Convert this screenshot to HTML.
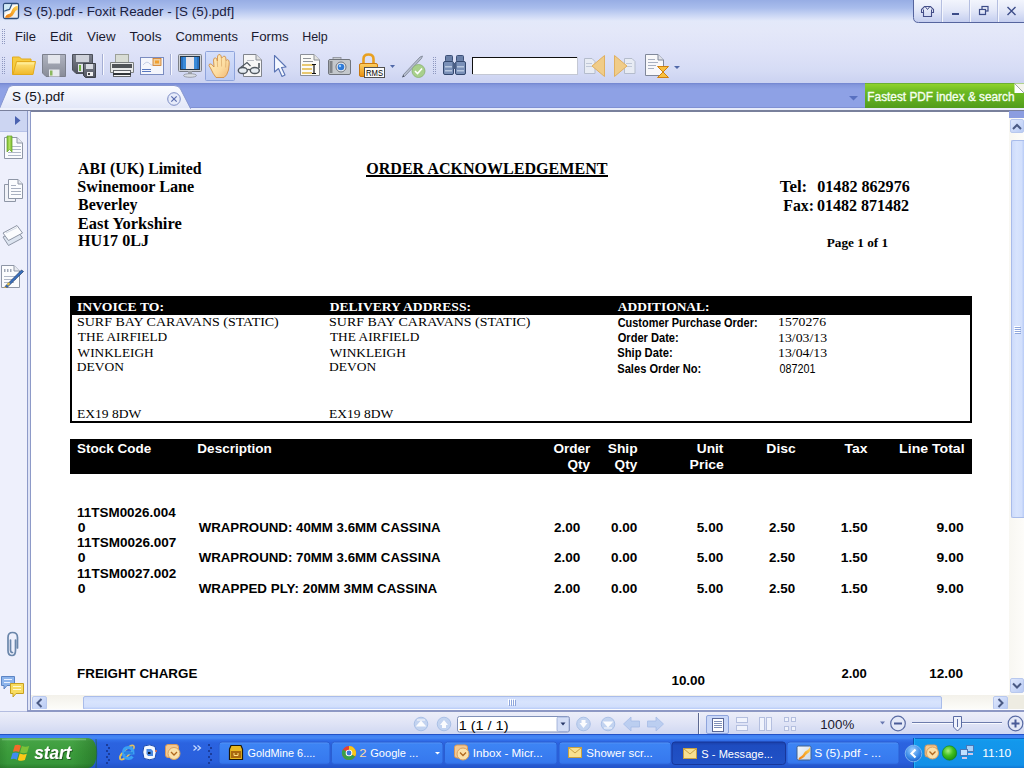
<!DOCTYPE html>
<html><head><meta charset="utf-8">
<style>
*{margin:0;padding:0;box-sizing:border-box}
html,body{width:1024px;height:768px;overflow:hidden;background:#fff;font-family:"Liberation Sans",sans-serif}
.a{position:absolute}
svg{position:absolute;left:0;top:0;overflow:visible}
</style></head><body>
<!-- chrome backgrounds -->
<div class="a" style="left:0;top:0;width:1024px;height:83px;background:linear-gradient(#97ade4 0px,#a9bdec 8px,#c9d5f4 15px,#e3e9fa 21px,#e4e8f9 30px,#dfe3f8 50px,#d6dcf5 70px,#cbd2f1 83px)"></div>
<!-- tab bar -->
<div class="a" style="left:0;top:83px;width:1024px;height:25px;background:linear-gradient(#7184d0 0px,#8497dc 2px,#8ea1e5 6px,#8ea1e5 25px)"></div>
<div class="a" style="left:0;top:107px;width:1024px;height:1px;background:#7f90d4"></div>
<div class="a" style="left:0;top:108px;width:1024px;height:2px;background:#e8ecfa"></div>
<div class="a" style="left:0;top:110px;width:1024px;height:2px;background:#79809c"></div>
<!-- main area -->
<div class="a" style="left:0;top:112px;width:27px;height:600px;background:#eef0fc"></div>
<div class="a" style="left:0;top:111px;width:27px;height:20px;background:#ccd5f2"></div>
<div class="a" style="left:0;top:131px;width:27px;height:1px;background:#b7c2e8"></div>
<div class="a" style="left:27px;top:111px;width:1px;height:601px;background:#8d9ac8"></div>
<div class="a" style="left:28px;top:111px;width:2px;height:601px;background:#dfe4f7"></div>
<div class="a" style="left:30px;top:111px;width:1px;height:601px;background:#8d9ac8"></div>
<div class="a" style="left:31px;top:112px;width:978px;height:583px;background:#fff"></div>
<!-- vertical scrollbar -->
<div class="a" style="left:1009px;top:111px;width:15px;height:584px;background:linear-gradient(90deg,#f8f7f2,#fdfcf9)"></div>
<div class="a" style="left:1009px;top:111px;width:15px;height:7px;background:#8b9de0"></div>
<div class="a" style="left:1010px;top:119px;width:14px;height:14px;border:1px solid #b8c8ee;border-radius:2px;background:linear-gradient(135deg,#dfe8fd,#b9cbf4)"></div>
<div class="a" style="left:1011px;top:140px;width:13px;height:378px;border:1px solid #a9bcea;border-right:0;border-radius:2px 0 0 2px;background:linear-gradient(90deg,#cddbfb,#d8e4fd 40%,#d2dffc 80%,#b8cbf6)"></div>
<div class="a" style="left:1010px;top:678px;width:14px;height:15px;border:1px solid #b8c8ee;border-radius:2px;background:linear-gradient(135deg,#dfe8fd,#b9cbf4)"></div>
<!-- horizontal scrollbar -->
<div class="a" style="left:31px;top:695px;width:993px;height:16px;background:linear-gradient(#f3f1ea,#fefefb)"></div>
<div class="a" style="left:32px;top:696px;width:15px;height:14px;border:1px solid #b8c8ee;border-radius:2px;background:linear-gradient(135deg,#dfe8fd,#b9cbf4)"></div>
<div class="a" style="left:83px;top:696px;width:859px;height:14px;border:1px solid #a9bcea;border-radius:2px;background:linear-gradient(#cddbfb,#d8e4fd 40%,#d2dffc 80%,#b8cbf6)"></div>
<div class="a" style="left:993px;top:696px;width:15px;height:14px;border:1px solid #b8c8ee;border-radius:2px;background:linear-gradient(135deg,#dfe8fd,#b9cbf4)"></div>
<div class="a" style="left:1008px;top:695px;width:16px;height:16px;background:#eeece2"></div>
<div class="a" style="left:0;top:711px;width:27px;height:1px;background:#b4bde0"></div><div class="a" style="left:31px;top:709px;width:993px;height:1px;background:#fbfcff"></div><div class="a" style="left:27px;top:710px;width:997px;height:2px;background:#8d98c4"></div>
<!-- status bar -->
<div class="a" style="left:0;top:712px;width:1024px;height:22px;background:linear-gradient(#eceef9,#e0e4f6 50%,#d0d8f2)"></div>
<!-- taskbar -->
<div class="a" style="left:0;top:734px;width:1024px;height:34px;background:linear-gradient(#2352c6 0px,#2352c6 1px,#3d7ef2 1px,#4688f4 4px,#3270ea 6px,#2b63e0 9px,#295fdc 28px,#2253c8 34px)"></div>
<!-- document boxes -->
<div class="a" style="left:70px;top:296px;width:902px;height:127px;border:2px solid #000;border-top:0"></div>
<div class="a" style="left:70px;top:296px;width:902px;height:19px;background:#000"></div>
<div class="a" style="left:70px;top:439px;width:902px;height:35px;background:#000"></div>
<div class="a" style="left:366px;top:175px;width:242px;height:2px;background:#000"></div>
<svg width="1024" height="768">
<text x="78.10" y="173.8" font-family="Liberation Serif" font-weight="700" font-size="15.7" fill="#000" textLength="123.54" lengthAdjust="spacingAndGlyphs">ABI (UK) Limited</text>
<text x="77.38" y="191.9" font-family="Liberation Serif" font-weight="700" font-size="15.7" fill="#000" textLength="116.83" lengthAdjust="spacingAndGlyphs">Swinemoor Lane</text>
<text x="78.00" y="210.4" font-family="Liberation Serif" font-weight="700" font-size="15.7" fill="#000" textLength="59.51" lengthAdjust="spacingAndGlyphs">Beverley</text>
<text x="77.85" y="228.8" font-family="Liberation Serif" font-weight="700" font-size="15.7" fill="#000" textLength="103.88" lengthAdjust="spacingAndGlyphs">East Yorkshire</text>
<text x="77.99" y="246.3" font-family="Liberation Serif" font-weight="700" font-size="15.7" fill="#000" textLength="70.93" lengthAdjust="spacingAndGlyphs">HU17 0LJ</text>
<text x="366.24" y="173.8" font-family="Liberation Serif" font-weight="700" font-size="15.7" fill="#000" textLength="241.20" lengthAdjust="spacingAndGlyphs">ORDER ACKNOWLEDGEMENT</text>
<text x="779.66" y="191.7" font-family="Liberation Serif" font-weight="700" font-size="15.7" fill="#000" textLength="27.62" lengthAdjust="spacingAndGlyphs">Tel:</text>
<text x="817.27" y="191.7" font-family="Liberation Serif" font-weight="700" font-size="15.7" fill="#000" textLength="92.48" lengthAdjust="spacingAndGlyphs">01482 862976</text>
<text x="783.27" y="210.6" font-family="Liberation Serif" font-weight="700" font-size="15.7" fill="#000" textLength="30.81" lengthAdjust="spacingAndGlyphs">Fax:</text>
<text x="816.97" y="210.6" font-family="Liberation Serif" font-weight="700" font-size="15.7" fill="#000" textLength="92.15" lengthAdjust="spacingAndGlyphs">01482 871482</text>
<text x="826.71" y="246.5" font-family="Liberation Serif" font-weight="700" font-size="12.8" fill="#000" textLength="61.44" lengthAdjust="spacingAndGlyphs">Page 1 of 1</text>
<text x="76.91" y="310.6" font-family="Liberation Serif" font-weight="700" font-size="13.5" fill="#fff" textLength="87.13" lengthAdjust="spacingAndGlyphs">INVOICE TO:</text>
<text x="329.70" y="310.6" font-family="Liberation Serif" font-weight="700" font-size="13.5" fill="#fff" textLength="141.31" lengthAdjust="spacingAndGlyphs">DELIVERY ADDRESS:</text>
<text x="617.77" y="310.5" font-family="Liberation Serif" font-weight="700" font-size="13.5" fill="#fff" textLength="91.65" lengthAdjust="spacingAndGlyphs">ADDITIONAL:</text>
<text x="76.99" y="325.6" font-family="Liberation Serif" font-weight="400" font-size="13.2" fill="#000" textLength="201.80" lengthAdjust="spacingAndGlyphs">SURF BAY CARAVANS (STATIC)</text>
<text x="77.84" y="341.3" font-family="Liberation Serif" font-weight="400" font-size="13.2" fill="#000" textLength="89.39" lengthAdjust="spacingAndGlyphs">THE AIRFIELD</text>
<text x="77.63" y="356.6" font-family="Liberation Serif" font-weight="400" font-size="13.2" fill="#000" textLength="76.03" lengthAdjust="spacingAndGlyphs">WINKLEIGH</text>
<text x="76.89" y="371.4" font-family="Liberation Serif" font-weight="400" font-size="13.2" fill="#000" textLength="47.17" lengthAdjust="spacingAndGlyphs">DEVON</text>
<text x="76.98" y="417.6" font-family="Liberation Serif" font-weight="400" font-size="13.2" fill="#000" textLength="64.28" lengthAdjust="spacingAndGlyphs">EX19 8DW</text>
<text x="329.09" y="325.6" font-family="Liberation Serif" font-weight="400" font-size="13.2" fill="#000" textLength="201.39" lengthAdjust="spacingAndGlyphs">SURF BAY CARAVANS (STATIC)</text>
<text x="329.94" y="341.3" font-family="Liberation Serif" font-weight="400" font-size="13.2" fill="#000" textLength="89.39" lengthAdjust="spacingAndGlyphs">THE AIRFIELD</text>
<text x="329.73" y="356.6" font-family="Liberation Serif" font-weight="400" font-size="13.2" fill="#000" textLength="76.03" lengthAdjust="spacingAndGlyphs">WINKLEIGH</text>
<text x="328.99" y="371.4" font-family="Liberation Serif" font-weight="400" font-size="13.2" fill="#000" textLength="47.17" lengthAdjust="spacingAndGlyphs">DEVON</text>
<text x="329.09" y="417.6" font-family="Liberation Serif" font-weight="400" font-size="13.2" fill="#000" textLength="64.08" lengthAdjust="spacingAndGlyphs">EX19 8DW</text>
<text x="617.70" y="326.9" font-family="Liberation Sans" font-weight="700" font-size="12.6" fill="#000" textLength="139.85" lengthAdjust="spacingAndGlyphs">Customer Purchase Order:</text>
<text x="617.69" y="341.9" font-family="Liberation Sans" font-weight="700" font-size="12.6" fill="#000" textLength="61.03" lengthAdjust="spacingAndGlyphs">Order Date:</text>
<text x="617.27" y="356.9" font-family="Liberation Sans" font-weight="700" font-size="12.6" fill="#000" textLength="55.35" lengthAdjust="spacingAndGlyphs">Ship Date:</text>
<text x="617.28" y="372.9" font-family="Liberation Sans" font-weight="700" font-size="12.6" fill="#000" textLength="84.05" lengthAdjust="spacingAndGlyphs">Sales Order No:</text>
<text x="778.04" y="326.2" font-family="Liberation Serif" font-weight="400" font-size="13.2" fill="#000" textLength="48.05" lengthAdjust="spacingAndGlyphs">1570276</text>
<text x="778.02" y="341.9" font-family="Liberation Serif" font-weight="400" font-size="13.2" fill="#000" textLength="49.12" lengthAdjust="spacingAndGlyphs">13/03/13</text>
<text x="778.02" y="356.9" font-family="Liberation Serif" font-weight="400" font-size="13.2" fill="#000" textLength="49.12" lengthAdjust="spacingAndGlyphs">13/04/13</text>
<text x="779.54" y="372.9" font-family="Liberation Sans" font-weight="400" font-size="12.6" fill="#000" textLength="35.93" lengthAdjust="spacingAndGlyphs">087201</text>
<text x="77.11" y="452.8" font-family="Liberation Sans" font-weight="700" font-size="13" fill="#fff" textLength="74.11" lengthAdjust="spacingAndGlyphs">Stock Code</text>
<text x="197.37" y="452.8" font-family="Liberation Sans" font-weight="700" font-size="13" fill="#fff" textLength="74.38" lengthAdjust="spacingAndGlyphs">Description</text>
<text x="553.40" y="452.8" font-family="Liberation Sans" font-weight="700" font-size="13" fill="#fff" textLength="36.98" lengthAdjust="spacingAndGlyphs">Order</text>
<text x="567.40" y="468.7" font-family="Liberation Sans" font-weight="700" font-size="13" fill="#fff" textLength="22.54" lengthAdjust="spacingAndGlyphs">Qty</text>
<text x="607.69" y="452.8" font-family="Liberation Sans" font-weight="700" font-size="13" fill="#fff" textLength="29.92" lengthAdjust="spacingAndGlyphs">Ship</text>
<text x="614.60" y="468.7" font-family="Liberation Sans" font-weight="700" font-size="13" fill="#fff" textLength="22.64" lengthAdjust="spacingAndGlyphs">Qty</text>
<text x="696.81" y="452.8" font-family="Liberation Sans" font-weight="700" font-size="13" fill="#fff" textLength="26.63" lengthAdjust="spacingAndGlyphs">Unit</text>
<text x="689.63" y="468.7" font-family="Liberation Sans" font-weight="700" font-size="13" fill="#fff" textLength="34.26" lengthAdjust="spacingAndGlyphs">Price</text>
<text x="766.34" y="452.8" font-family="Liberation Sans" font-weight="700" font-size="13" fill="#fff" textLength="29.42" lengthAdjust="spacingAndGlyphs">Disc</text>
<text x="844.56" y="452.8" font-family="Liberation Sans" font-weight="700" font-size="13" fill="#fff" textLength="22.98" lengthAdjust="spacingAndGlyphs">Tax</text>
<text x="899.13" y="452.8" font-family="Liberation Sans" font-weight="700" font-size="13" fill="#fff" textLength="65.47" lengthAdjust="spacingAndGlyphs">Line Total</text>
<text x="77.12" y="516.8" font-family="Liberation Sans" font-weight="700" font-size="13" fill="#000" textLength="98.50" lengthAdjust="spacingAndGlyphs">11TSM0026.004</text>
<text x="77.78" y="531.8" font-family="Liberation Sans" font-weight="700" font-size="13" fill="#000" textLength="7.76" lengthAdjust="spacingAndGlyphs">0</text>
<text x="198.68" y="531.8" font-family="Liberation Sans" font-weight="700" font-size="13" fill="#000" textLength="241.89" lengthAdjust="spacingAndGlyphs">WRAPROUND: 40MM 3.6MM CASSINA</text>
<text x="554.08" y="531.8" font-family="Liberation Sans" font-weight="700" font-size="13" fill="#000" textLength="26.32" lengthAdjust="spacingAndGlyphs">2.00</text>
<text x="611.00" y="531.8" font-family="Liberation Sans" font-weight="700" font-size="13" fill="#000" textLength="26.31" lengthAdjust="spacingAndGlyphs">0.00</text>
<text x="696.83" y="531.8" font-family="Liberation Sans" font-weight="700" font-size="13" fill="#000" textLength="26.38" lengthAdjust="spacingAndGlyphs">5.00</text>
<text x="769.09" y="531.8" font-family="Liberation Sans" font-weight="700" font-size="13" fill="#000" textLength="26.01" lengthAdjust="spacingAndGlyphs">2.50</text>
<text x="840.69" y="531.8" font-family="Liberation Sans" font-weight="700" font-size="13" fill="#000" textLength="26.93" lengthAdjust="spacingAndGlyphs">1.50</text>
<text x="936.64" y="531.8" font-family="Liberation Sans" font-weight="700" font-size="13" fill="#000" textLength="26.99" lengthAdjust="spacingAndGlyphs">9.00</text>
<text x="77.11" y="547.3" font-family="Liberation Sans" font-weight="700" font-size="13" fill="#000" textLength="99.13" lengthAdjust="spacingAndGlyphs">11TSM0026.007</text>
<text x="77.78" y="562.3" font-family="Liberation Sans" font-weight="700" font-size="13" fill="#000" textLength="7.76" lengthAdjust="spacingAndGlyphs">0</text>
<text x="198.68" y="562.3" font-family="Liberation Sans" font-weight="700" font-size="13" fill="#000" textLength="241.89" lengthAdjust="spacingAndGlyphs">WRAPROUND: 70MM 3.6MM CASSINA</text>
<text x="554.08" y="562.3" font-family="Liberation Sans" font-weight="700" font-size="13" fill="#000" textLength="26.32" lengthAdjust="spacingAndGlyphs">2.00</text>
<text x="611.00" y="562.3" font-family="Liberation Sans" font-weight="700" font-size="13" fill="#000" textLength="26.31" lengthAdjust="spacingAndGlyphs">0.00</text>
<text x="696.83" y="562.3" font-family="Liberation Sans" font-weight="700" font-size="13" fill="#000" textLength="26.38" lengthAdjust="spacingAndGlyphs">5.00</text>
<text x="769.09" y="562.3" font-family="Liberation Sans" font-weight="700" font-size="13" fill="#000" textLength="26.01" lengthAdjust="spacingAndGlyphs">2.50</text>
<text x="840.69" y="562.3" font-family="Liberation Sans" font-weight="700" font-size="13" fill="#000" textLength="26.93" lengthAdjust="spacingAndGlyphs">1.50</text>
<text x="936.64" y="562.3" font-family="Liberation Sans" font-weight="700" font-size="13" fill="#000" textLength="26.99" lengthAdjust="spacingAndGlyphs">9.00</text>
<text x="77.11" y="577.5" font-family="Liberation Sans" font-weight="700" font-size="13" fill="#000" textLength="99.10" lengthAdjust="spacingAndGlyphs">11TSM0027.002</text>
<text x="77.78" y="592.5" font-family="Liberation Sans" font-weight="700" font-size="13" fill="#000" textLength="7.76" lengthAdjust="spacingAndGlyphs">0</text>
<text x="198.67" y="592.5" font-family="Liberation Sans" font-weight="700" font-size="13" fill="#000" textLength="238.56" lengthAdjust="spacingAndGlyphs">WRAPPED PLY: 20MM 3MM CASSINA</text>
<text x="554.08" y="592.5" font-family="Liberation Sans" font-weight="700" font-size="13" fill="#000" textLength="26.32" lengthAdjust="spacingAndGlyphs">2.00</text>
<text x="611.00" y="592.5" font-family="Liberation Sans" font-weight="700" font-size="13" fill="#000" textLength="26.31" lengthAdjust="spacingAndGlyphs">0.00</text>
<text x="696.83" y="592.5" font-family="Liberation Sans" font-weight="700" font-size="13" fill="#000" textLength="26.38" lengthAdjust="spacingAndGlyphs">5.00</text>
<text x="769.09" y="592.5" font-family="Liberation Sans" font-weight="700" font-size="13" fill="#000" textLength="26.01" lengthAdjust="spacingAndGlyphs">2.50</text>
<text x="840.69" y="592.5" font-family="Liberation Sans" font-weight="700" font-size="13" fill="#000" textLength="26.93" lengthAdjust="spacingAndGlyphs">1.50</text>
<text x="936.64" y="592.5" font-family="Liberation Sans" font-weight="700" font-size="13" fill="#000" textLength="26.99" lengthAdjust="spacingAndGlyphs">9.00</text>
<text x="77.09" y="677.6" font-family="Liberation Sans" font-weight="700" font-size="13" fill="#000" textLength="120.24" lengthAdjust="spacingAndGlyphs">FREIGHT CHARGE</text>
<text x="671.42" y="684.7" font-family="Liberation Sans" font-weight="700" font-size="13" fill="#000" textLength="33.67" lengthAdjust="spacingAndGlyphs">10.00</text>
<text x="841.40" y="677.8" font-family="Liberation Sans" font-weight="700" font-size="13" fill="#000" textLength="25.49" lengthAdjust="spacingAndGlyphs">2.00</text>
<text x="929.21" y="677.8" font-family="Liberation Sans" font-weight="700" font-size="13" fill="#000" textLength="33.98" lengthAdjust="spacingAndGlyphs">12.00</text>
</svg>
<!-- ===== TITLE BAR ===== -->
<svg width="1024" height="768" style="pointer-events:none">
<defs>
<linearGradient id="fxbg" x1="0" y1="0" x2="1" y2="1"><stop offset="0" stop-color="#f4f8fc"/><stop offset="1" stop-color="#c9d6e6"/></linearGradient>
<linearGradient id="fxsw" x1="0" y1="1" x2="1" y2="0"><stop offset="0" stop-color="#f07a10"/><stop offset="0.6" stop-color="#f8b030"/><stop offset="1" stop-color="#ffd860"/></linearGradient>
<linearGradient id="wbtn" x1="0" y1="0" x2="0" y2="1"><stop offset="0" stop-color="#f4f6fd"/><stop offset="0.5" stop-color="#e2e7f8"/><stop offset="1" stop-color="#c3cdef"/></linearGradient>
<linearGradient id="fold" x1="0" y1="0" x2="0" y2="1"><stop offset="0" stop-color="#ffe680"/><stop offset="1" stop-color="#f0b828"/></linearGradient>
<linearGradient id="flop" x1="0" y1="0" x2="0" y2="1"><stop offset="0" stop-color="#b0b4c0"/><stop offset="1" stop-color="#888c98"/></linearGradient>
<linearGradient id="flop2" x1="0" y1="0" x2="0" y2="1"><stop offset="0" stop-color="#7c808c"/><stop offset="1" stop-color="#50545e"/></linearGradient>
<linearGradient id="green" x1="0" y1="0" x2="0" y2="1"><stop offset="0" stop-color="#93d52c"/><stop offset="0.35" stop-color="#6cba22"/><stop offset="1" stop-color="#519c1c"/></linearGradient>
<linearGradient id="tabg" x1="0" y1="0" x2="0" y2="1"><stop offset="0" stop-color="#fbfcff"/><stop offset="1" stop-color="#e2e7f8"/></linearGradient>
<linearGradient id="lockg" x1="0" y1="0" x2="0" y2="1"><stop offset="0" stop-color="#ffd060"/><stop offset="1" stop-color="#e89010"/></linearGradient>
<linearGradient id="startg" x1="0" y1="0" x2="0" y2="1"><stop offset="0" stop-color="#5aaf5a"/><stop offset="0.12" stop-color="#44a244"/><stop offset="0.5" stop-color="#3b9b3b"/><stop offset="0.85" stop-color="#37963a"/><stop offset="1" stop-color="#2d7f2f"/></linearGradient>
<linearGradient id="btng" x1="0" y1="0" x2="0" y2="1"><stop offset="0" stop-color="#5a98f8"/><stop offset="0.1" stop-color="#3d84f4"/><stop offset="0.9" stop-color="#3678ee"/><stop offset="1" stop-color="#2c66dc"/></linearGradient>
<linearGradient id="btnp" x1="0" y1="0" x2="0" y2="1"><stop offset="0" stop-color="#1a3fa8"/><stop offset="0.15" stop-color="#1e4cc0"/><stop offset="1" stop-color="#2152c6"/></linearGradient>
<linearGradient id="trayg" x1="0" y1="0" x2="0" y2="1"><stop offset="0" stop-color="#15a6f2"/><stop offset="0.1" stop-color="#1398ec"/><stop offset="0.9" stop-color="#1290e8"/><stop offset="1" stop-color="#1077d4"/></linearGradient>
<radialGradient id="ball" cx="0.4" cy="0.35" r="0.7"><stop offset="0" stop-color="#a8f080"/><stop offset="0.5" stop-color="#40c020"/><stop offset="1" stop-color="#189010"/></radialGradient>
<radialGradient id="bluec" cx="0.45" cy="0.3" r="0.75"><stop offset="0" stop-color="#a0d0ff"/><stop offset="0.6" stop-color="#3c8ce8"/><stop offset="1" stop-color="#1858c8"/></radialGradient>
<linearGradient id="hbox" x1="0" y1="0" x2="0" y2="1"><stop offset="0" stop-color="#d6e0fb"/><stop offset="1" stop-color="#bccbf4"/></linearGradient>
<linearGradient id="startsh" x1="0" y1="0" x2="1" y2="0"><stop offset="0" stop-color="#0a400a" stop-opacity="0.15"/><stop offset="0.08" stop-color="#0a400a" stop-opacity="0"/><stop offset="0.75" stop-color="#0a400a" stop-opacity="0"/><stop offset="1" stop-color="#0a400a" stop-opacity="0.3"/></linearGradient>
<linearGradient id="bmk" x1="0" y1="0" x2="1" y2="0"><stop offset="0" stop-color="#78b828"/><stop offset="0.5" stop-color="#b0e060"/><stop offset="1" stop-color="#78b828"/></linearGradient>
<linearGradient id="handg" x1="0" y1="0" x2="1" y2="1"><stop offset="0" stop-color="#fff0c0"/><stop offset="0.6" stop-color="#fcdca0"/><stop offset="1" stop-color="#f0b878"/></linearGradient>
<filter id="tsh" x="-10%" y="-10%" width="130%" height="140%"><feDropShadow dx="1" dy="1" stdDeviation="0.6" flood-color="#1a4a1a" flood-opacity="0.8"/></filter>
</defs>

<!-- app icon -->
<rect x="3.5" y="3.5" width="15" height="15" rx="1.5" fill="#eceef2" stroke="#2e4c78" stroke-width="1.3"/>
<path d="M4.2 4.2 L11.8 4.2 L9.6 9.3 L4.2 11.2 Z" fill="#cfe9f6"/>
<path d="M4.2 11.2 Q7 9.8 9.6 9.3 L11.8 4.2" fill="none" stroke="#2e5480" stroke-width="1.2"/>
<path d="M4.5 14.5 Q7 11.5 10.2 11 L12.5 5.5 L17.8 4.4 L17.8 6 Q14 7 12.5 10.5 Q10.5 13.5 6 17.5 L4.5 17.5 Z" fill="#fffef4"/>
<path d="M5 17.8 Q6 14.5 9.5 13.8 Q11 13.2 12 10 Q13.5 6.5 17.8 5.8 L17.8 9.5 Q15 10.5 14 13.5 Q12.5 17 9 17.8 Z" fill="url(#fxsw)"/>
<!-- window buttons -->
<path d="M913.5 -1 L913.5 17.5 Q913.5 22.5 918.5 22.5 L1025 22.5 L1025 -1 Z" fill="url(#wbtn)" stroke="#55649e" stroke-width="1"/>
<rect x="941" y="0" width="1" height="22" fill="#b4bee0"/><rect x="942" y="0" width="1" height="22" fill="#f4f6fd"/>
<rect x="969" y="0" width="1" height="22" fill="#b4bee0"/><rect x="970" y="0" width="1" height="22" fill="#f4f6fd"/>
<rect x="997" y="0" width="1" height="22" fill="#b4bee0"/><rect x="998" y="0" width="1" height="22" fill="#f4f6fd"/>
<path d="M924.5 6.5 L930.5 6.5 L933.5 9.5 L933.5 12.5 L931.5 12.5 L931.5 16.5 L923.5 16.5 L923.5 12.5 L921.5 12.5 L921.5 9.5 Z" fill="none" stroke="#444e88" stroke-width="1.1" stroke-linejoin="miter"/>
<path d="M923.5 9.5 L923.5 12.5 M931.5 9.5 L931.5 12.5" stroke="#444e88" stroke-width="1"/>
<path d="M925.5 7 L927.5 9.5 L929.5 7" fill="none" stroke="#444e88" stroke-width="1"/>
<rect x="952" y="13" width="7" height="2" fill="#3c4c88"/>
<rect x="982" y="6.5" width="6" height="4.5" fill="none" stroke="#3c4c88" stroke-width="1.2"/>
<rect x="979.5" y="9.5" width="6" height="5" fill="url(#wbtn)" stroke="#3c4c88" stroke-width="1.2"/>
<path d="M1007.5 7 L1015.5 15 M1015.5 7 L1007.5 15" stroke="#3c4c88" stroke-width="1.4"/>

<!-- menu grip -->
<g fill="#8e98c0">
<rect x="2" y="29" width="1" height="1"/><rect x="4" y="29" width="1" height="1"/>
<rect x="2" y="31" width="1" height="1"/><rect x="4" y="31" width="1" height="1"/>
<rect x="2" y="33" width="1" height="1"/><rect x="4" y="33" width="1" height="1"/>
<rect x="2" y="35" width="1" height="1"/><rect x="4" y="35" width="1" height="1"/>
<rect x="2" y="37" width="1" height="1"/><rect x="4" y="37" width="1" height="1"/>
<rect x="2" y="39" width="1" height="1"/><rect x="4" y="39" width="1" height="1"/>
<rect x="2" y="41" width="1" height="1"/><rect x="4" y="41" width="1" height="1"/>
<rect x="2" y="43" width="1" height="1"/><rect x="4" y="43" width="1" height="1"/>
</g>
<!-- toolbar grips -->
<g fill="#8e98c0">
<rect x="2" y="57" width="1" height="1"/><rect x="4" y="57" width="1" height="1"/>
<rect x="2" y="59" width="1" height="1"/><rect x="4" y="59" width="1" height="1"/>
<rect x="2" y="61" width="1" height="1"/><rect x="4" y="61" width="1" height="1"/>
<rect x="2" y="63" width="1" height="1"/><rect x="4" y="63" width="1" height="1"/>
<rect x="2" y="65" width="1" height="1"/><rect x="4" y="65" width="1" height="1"/>
<rect x="2" y="67" width="1" height="1"/><rect x="4" y="67" width="1" height="1"/>
<rect x="2" y="69" width="1" height="1"/><rect x="4" y="69" width="1" height="1"/>
<rect x="2" y="71" width="1" height="1"/><rect x="4" y="71" width="1" height="1"/>
<rect x="2" y="73" width="1" height="1"/><rect x="4" y="73" width="1" height="1"/>
<rect x="433" y="57" width="1" height="1"/><rect x="435" y="57" width="1" height="1"/>
<rect x="433" y="59" width="1" height="1"/><rect x="435" y="59" width="1" height="1"/>
<rect x="433" y="61" width="1" height="1"/><rect x="435" y="61" width="1" height="1"/>
<rect x="433" y="63" width="1" height="1"/><rect x="435" y="63" width="1" height="1"/>
<rect x="433" y="65" width="1" height="1"/><rect x="435" y="65" width="1" height="1"/>
<rect x="433" y="67" width="1" height="1"/><rect x="435" y="67" width="1" height="1"/>
<rect x="433" y="69" width="1" height="1"/><rect x="435" y="69" width="1" height="1"/>
<rect x="433" y="71" width="1" height="1"/><rect x="435" y="71" width="1" height="1"/>
<rect x="433" y="73" width="1" height="1"/><rect x="435" y="73" width="1" height="1"/>
</g>
<!-- ===== TOOLBAR ICONS ===== -->
<!-- folder 12-36 x 56-75 -->
<path d="M12.5 57 L19.5 57 L21.5 59 L31 59 L31 74.5 L12.5 74.5 Z" fill="#f6cc40" stroke="#e2aa1c" stroke-width="1" stroke-linejoin="round"/>
<path d="M16.5 61.5 L35.5 61.5 L33 74.5 L13 74.5 Z" fill="url(#fold)" stroke="#e2aa1c" stroke-width="1" stroke-linejoin="round"/>
<rect x="17" y="62.5" width="17" height="2" fill="#fff0a0" opacity="0.7"/>
<!-- save 42-66 x 54-77 -->
<path d="M42.5 54.5 L65.5 54.5 L65.5 76.5 L46 76.5 L42.5 73 Z" fill="url(#flop)" stroke="#7c808c" stroke-width="1"/>
<rect x="48" y="55" width="12" height="8.5" fill="#e4e6ec"/>
<rect x="49" y="69.5" width="10.5" height="7" fill="#e8eaee"/>
<rect x="50" y="70.5" width="2.5" height="5" fill="#8cb860"/>
<!-- save as 72-96 x 54-77 -->
<path d="M72.5 54.5 L92.5 54.5 L92.5 73.5 L76 73.5 L72.5 70 Z" fill="url(#flop2)" stroke="#4c505a" stroke-width="1"/>
<rect x="76" y="55" width="13" height="7" fill="#cfd2da"/>
<rect x="78" y="64" width="5" height="8" fill="#e0e2e8"/><rect x="79" y="65" width="2" height="6" fill="#70b040"/>
<path d="M83.5 63.5 L95.5 63.5 L95.5 77.5 L85.5 77.5 L83.5 75.5 Z" fill="url(#flop2)" stroke="#3c4048" stroke-width="1"/>
<rect x="86" y="64" width="7" height="5" fill="#d8dbe2"/>
<rect x="87" y="72" width="6" height="4" fill="#f0f0f0"/><rect x="88" y="73" width="2" height="2" fill="#404040"/>
<!-- sep -->
<rect x="102" y="54" width="1" height="21" fill="#a4aed4"/><rect x="103" y="54" width="1" height="21" fill="#f8f9fe"/>
<!-- printer 110-133 x 54-77 -->
<rect x="115.5" y="54.5" width="13" height="8" fill="#d8dcd4" stroke="#9ca098" stroke-width="1"/>
<path d="M110.5 62.5 L133.5 62.5 L133.5 72.5 L110.5 72.5 Z" fill="#e8eaea" stroke="#7c8080" stroke-width="1"/>
<rect x="112" y="64" width="20" height="4" fill="#505458"/>
<rect x="113.5" y="70.5" width="17" height="6" fill="#f4f4f4" stroke="#606468" stroke-width="1"/>
<rect x="113" y="73" width="18" height="2" fill="#303438"/>
<!-- email 140-164 x 57-75 -->
<rect x="140.5" y="57.5" width="23" height="17" fill="#f4f6fc" stroke="#7a8cc0" stroke-width="1"/>
<path d="M143 65 Q147 60 150 64 Q153 67 156 62" fill="none" stroke="#b8c4e0" stroke-width="0.8"/>
<rect x="153" y="58.5" width="8" height="7" fill="#f0d0a0" stroke="#d07820" stroke-width="0.8"/>
<rect x="155" y="60.5" width="4" height="3" fill="#f0a030"/>
<rect x="142" y="69" width="9" height="1" fill="#5878c0"/><rect x="142" y="71" width="9" height="1" fill="#5878c0"/>
<!-- sep -->
<rect x="170" y="54" width="1" height="21" fill="#a4aed4"/><rect x="171" y="54" width="1" height="21" fill="#f8f9fe"/>
<!-- monitor 178-202 x 54-77 -->
<rect x="178.5" y="54.5" width="23" height="17" rx="1" fill="#d0d3d8" stroke="#7c8088" stroke-width="1"/>
<rect x="181" y="57" width="18" height="12" fill="#3a8ad8"/>
<rect x="186" y="57" width="8" height="12" fill="#e8e4e8"/>
<rect x="181" y="57" width="2" height="12" fill="#2870c0"/><rect x="197" y="57" width="2" height="12" fill="#2870c0"/><rect x="180.5" y="56.5" width="19" height="13" fill="none" stroke="#283848" stroke-width="1"/>
<rect x="188" y="71" width="4" height="3" fill="#a0a4ac"/>
<ellipse cx="190" cy="75.5" rx="6.5" ry="1.8" fill="#d8dce4" stroke="#8c9098" stroke-width="0.8"/>
<!-- hand selected 205.5-234.6 x 51-80.5 -->
<rect x="205.5" y="51.5" width="29" height="29" rx="1" fill="url(#hbox)" stroke="#8ea4dc" stroke-width="1"/>
<path d="M216 77.5 Q212.5 73 211 69 L209 65.5 Q209 63.3 211.2 64 L214 67 L213.5 60 Q214 57.3 215.8 58 Q217.2 58.5 217.3 61 L217.6 56 Q218.5 53.8 220.2 54.7 Q221.4 55.5 221.4 58 L222.5 57.3 Q223.6 55.6 225.1 56.4 Q226.2 57.4 225.9 60.5 L226.5 60.3 Q227.6 59 228.7 60.4 Q229.5 62 229.1 65 L228.5 70 Q227 75.8 224 77.5 Z" fill="url(#handg)" stroke="#d09048" stroke-width="0.9" stroke-linejoin="round"/>
<path d="M217.3 61 L217.6 67 M221.4 58 L221.6 66.5 M225.9 60.5 L225.6 67.5" stroke="#e0b070" stroke-width="0.8"/>
<!-- glasses doc 238-262 x 54-77 -->
<path d="M243.5 54.5 L256 54.5 L261.5 60 L261.5 76.5 L243.5 76.5 Z" fill="#f6f6f6" stroke="#80848c" stroke-width="1"/>
<path d="M256 54.5 L256 60 L261.5 60" fill="#e0e0e0" stroke="#8c9098" stroke-width="1"/>
<rect x="247" y="60" width="7" height="1" fill="#b8bcc4"/>
<path d="M240 68 L247 62.5 L250.5 66" fill="none" stroke="#505860" stroke-width="1.2"/>
<path d="M259 68 L259 63" fill="none" stroke="#505860" stroke-width="1.6"/>
<ellipse cx="242.8" cy="70.5" rx="4.5" ry="3" fill="#e6ecf2" stroke="#505860" stroke-width="1.4"/>
<ellipse cx="254.8" cy="70.5" rx="4.5" ry="3" fill="#e6ecf2" stroke="#505860" stroke-width="1.4"/>
<path d="M247.3 70 Q248.8 68.8 250.3 70" fill="none" stroke="#505860" stroke-width="1.2"/>
<!-- arrow 274-286 x 55-77 -->
<path d="M274.5 55.5 L274.5 72 L278.5 68.5 L282 76.5 L285 75 L281.5 67.5 L286 67 Z" fill="#f4f8ff" stroke="#5a74b4" stroke-width="1.1" stroke-linejoin="round"/>
<!-- text doc 300-320 x 54-76 -->
<path d="M300.5 54.5 L314 54.5 L319.5 60 L319.5 75.5 L300.5 75.5 Z" fill="#fbfbf8" stroke="#8c9098" stroke-width="1"/>
<path d="M314 54.5 L314 60 L319.5 60" fill="#e4e4e0" stroke="#8c9098" stroke-width="1"/>
<rect x="303" y="58" width="8" height="1" fill="#909498"/><rect x="303" y="61" width="10" height="1" fill="#909498"/>
<rect x="302" y="64" width="11" height="2" fill="#e8c870"/><rect x="302" y="68" width="10" height="2" fill="#e8c870"/><rect x="302" y="72" width="10" height="2" fill="#e8c870"/>
<path d="M312 64.5 L316 64.5 M314 64.5 L314 73.5 M312 73.5 L316 73.5" stroke="#101010" stroke-width="1.2"/>
<!-- camera 328-351 x 57-75 -->
<rect x="333" y="57.5" width="8" height="3" fill="#c8ccd0" stroke="#8c9098" stroke-width="0.8"/>
<rect x="328.5" y="59.5" width="22" height="15" rx="1.5" fill="#c4c8cc" stroke="#70747c" stroke-width="1"/>
<rect x="329.5" y="61" width="3" height="12" fill="#808488"/>
<circle cx="341" cy="67" r="5" fill="#e8eaec" stroke="#70747c" stroke-width="1"/>
<circle cx="341" cy="67" r="3.3" fill="#2e7ad8"/>
<circle cx="340" cy="66" r="1.2" fill="#9cd0ff"/>
<!-- lock RMS 359-384 x 54-77 -->
<path d="M363.5 64 L363.5 59 Q363.5 54.5 368.5 54.5 Q373.5 54.5 373.5 59 L373.5 64" fill="none" stroke="#e8a020" stroke-width="2.6"/>
<rect x="359.5" y="63.5" width="18" height="13" rx="1.5" fill="url(#lockg)" stroke="#c87810" stroke-width="1"/>
<rect x="364.5" y="67.5" width="20" height="10" fill="#fcfcfc" stroke="#505050" stroke-width="1"/>
<text x="366" y="76" font-family="Liberation Sans" font-size="8.5" font-weight="400" fill="#000" textLength="17" lengthAdjust="spacingAndGlyphs">RMS</text>
<path d="M390 65 L395 65 L392.5 68 Z" fill="#5068a8"/>
<!-- pen check 401-425 x 55-78 -->
<path d="M403 75 L420 57 L422.5 56 L421.5 58.5 L404.5 76.5 Z" fill="#b4bccc" stroke="#7c8494" stroke-width="0.8"/>
<path d="M402 77.5 L403 75 L404.5 76.5 Z" fill="#404858"/>
<circle cx="418.5" cy="71" r="6.5" fill="#a8d08c" stroke="#88b070" stroke-width="0.8"/>
<path d="M415 71 L417.5 73.5 L422 68.5" fill="none" stroke="#fff" stroke-width="1.6"/>
<!-- binoculars 443-466 x 55-75 -->
<rect x="445.5" y="55.5" width="7" height="6" rx="1" fill="#6a80a8" stroke="#3c5078" stroke-width="1"/>
<rect x="456.5" y="55.5" width="7" height="6" rx="1" fill="#6a80a8" stroke="#3c5078" stroke-width="1"/>
<rect x="443.5" y="61.5" width="10" height="13" rx="1.5" fill="#7a90b8" stroke="#34486e" stroke-width="1"/>
<rect x="455.5" y="61.5" width="10" height="13" rx="1.5" fill="#7a90b8" stroke="#34486e" stroke-width="1"/>
<rect x="452.5" y="63" width="4" height="6" fill="#4a5e84"/>
<rect x="445" y="66" width="7" height="1.5" fill="#b8c8e0"/><rect x="457" y="66" width="7" height="1.5" fill="#b8c8e0"/>
<rect x="445" y="70" width="7" height="1.5" fill="#b8c8e0"/><rect x="457" y="70" width="7" height="1.5" fill="#b8c8e0"/>
<!-- search box 472-578 x 57-75 -->
<rect x="472" y="57" width="106" height="18" fill="#fff"/>
<rect x="472" y="57" width="106" height="1" fill="#101010"/><rect x="472" y="57" width="1" height="18" fill="#101010"/>
<rect x="472" y="74" width="106" height="1" fill="#c4c8d4"/><rect x="577" y="57" width="1" height="18" fill="#c4c8d4"/>
<!-- prev 584-605 x 55-77 -->
<path d="M584.5 58.5 L592 58.5 L595 61.5 L595 73.5 L584.5 73.5 Z" fill="#e8ecf4" stroke="#b4bccc" stroke-width="1"/>
<rect x="586" y="63" width="6" height="1" fill="#c0c8d8"/><rect x="586" y="66" width="6" height="1" fill="#c0c8d8"/>
<path d="M604.5 55.5 L604.5 76.5 L592 66 Z" fill="#f0cc88" stroke="#e0b060" stroke-width="1" stroke-linejoin="round"/>
<!-- next 614-635 x 55-77 -->
<path d="M624.5 58.5 L632 58.5 L635 61.5 L635 73.5 L624.5 73.5 Z" fill="#e8ecf4" stroke="#b4bccc" stroke-width="1"/>
<rect x="626" y="63" width="6" height="1" fill="#c0c8d8"/><rect x="626" y="66" width="6" height="1" fill="#c0c8d8"/>
<path d="M614.5 55.5 L614.5 76.5 L627 66 Z" fill="#f0cc88" stroke="#e0b060" stroke-width="1" stroke-linejoin="round"/>
<!-- doc hourglass 645-669 x 54-78 -->
<path d="M645.5 54.5 L658 54.5 L663.5 60 L663.5 75.5 L645.5 75.5 Z" fill="#f8f8fa" stroke="#80889a" stroke-width="1"/>
<path d="M658 54.5 L658 60 L663.5 60" fill="#e0e2e8" stroke="#80889a" stroke-width="1"/>
<rect x="648" y="59" width="7" height="1" fill="#a8b0c0"/><rect x="648" y="62" width="10" height="1" fill="#a8b0c0"/><rect x="648" y="65" width="8" height="1" fill="#a8b0c0"/><rect x="648" y="68" width="6" height="1" fill="#a8b0c0"/>
<path d="M657.5 66.5 L668.5 66.5 L663 72 L668.5 77.5 L657.5 77.5 L663 72 Z" fill="#f8c040" stroke="#d08010" stroke-width="1" stroke-linejoin="round"/>
<path d="M674 66 L680 66 L677 69 Z" fill="#5068a8"/>
<!-- ===== TAB BAR ===== -->
<path d="M-0.5 108.5 L8 88.5 Q9.5 85.5 13 85.5 L174 85.5 Q178.5 85.5 180.5 89 L190.5 108.5 Z" fill="url(#tabg)" stroke="#8796cf" stroke-width="1"/>
<rect x="0" y="108" width="190" height="2" fill="#eef1fb"/>
<circle cx="174" cy="99" r="6.3" fill="#e6ebfa" stroke="#7c8cc4" stroke-width="1"/>
<path d="M171.3 96.3 L176.7 101.7 M176.7 96.3 L171.3 101.7" stroke="#5a6cae" stroke-width="1.2"/>
<path d="M849 96 L858 96 L853.5 100.5 Z" fill="#5870c0"/>
<rect x="865" y="83" width="159" height="25" fill="url(#green)"/>
<rect x="865" y="83" width="159" height="1" fill="#6cb030"/>
<path d="M1014.5 83.5 L1024 83.5 L1024 93 Z" fill="#f4f4ec"/>
<path d="M1014.5 83.5 L1014.5 93 L1024 93 Z" fill="#ffffff"/>
<path d="M1014.5 83.5 L1024 93" stroke="#9098a0" stroke-width="0.8"/>

<!-- ===== SIDEBAR ===== -->
<path d="M15 116 L15 125 L20.5 120.5 Z" fill="#4a62b0"/>
<!-- bookmarks 4-23 x 137-159 -->
<path d="M4.5 137.5 L17 137.5 L22.5 143 L22.5 158.5 L4.5 158.5 Z" fill="#fbfcfe" stroke="#8e96a6" stroke-width="1"/>
<path d="M17 137.5 L17 143 L22.5 143" fill="#e8eaf0" stroke="#8e96a6" stroke-width="1"/>
<rect x="12" y="146" width="9" height="1" fill="#b0b8c8"/><rect x="12" y="149" width="9" height="1" fill="#b0b8c8"/><rect x="8" y="152" width="13" height="1" fill="#b0b8c8"/><rect x="8" y="155" width="13" height="1" fill="#b0b8c8"/>
<path d="M7 136 L12 136 L12 152 L9.5 149.5 L7 152 Z" fill="url(#bmk)" stroke="#70a838" stroke-width="0.8"/>
<!-- pages 4-23 x 179-202 -->
<path d="M4.5 184.5 L15.5 184.5 L15.5 201.5 L4.5 201.5 Z" fill="#f0f2f8" stroke="#8e96a6" stroke-width="1"/>
<path d="M8.5 179.5 L18 179.5 L22.5 184 L22.5 198.5 L8.5 198.5 Z" fill="#fbfcfe" stroke="#8e96a6" stroke-width="1"/>
<path d="M18 179.5 L18 184 L22.5 184" fill="#e8eaf0" stroke="#8e96a6" stroke-width="1"/>
<rect x="11" y="185" width="5" height="1" fill="#a8b0c0"/><rect x="11" y="188" width="10" height="1" fill="#a8b0c0"/><rect x="11" y="191" width="10" height="1" fill="#a8b0c0"/><rect x="11" y="194" width="10" height="1" fill="#a8b0c0"/>
<!-- layers 2-23 x 222-246 -->
<path d="M3 237 L17 230 L22.5 238 L8.5 245.5 Z" fill="#dce4f0" stroke="#8e96a6" stroke-width="1" stroke-linejoin="round"/>
<path d="M3 233 L17 225.5 L22.5 233 L8.5 240.5 Z" fill="#fbfcfe" stroke="#8e96a6" stroke-width="1" stroke-linejoin="round"/>
<path d="M6 233 L17 227.5" stroke="#c8d0e0" stroke-width="0.8"/>
<!-- sign 1-24 x 265-288 -->
<path d="M1.5 265.5 L14 265.5 L19.5 271 L19.5 287.5 L1.5 287.5 Z" fill="#fbfcfe" stroke="#8e96a6" stroke-width="1"/>
<path d="M14 265.5 L14 271 L19.5 271" fill="#e8eaf0" stroke="#8e96a6" stroke-width="1"/>
<rect x="4" y="269" width="1.5" height="3" fill="#a0a8b8"/><rect x="7" y="269" width="1.5" height="3" fill="#a0a8b8"/><rect x="10" y="269" width="1.5" height="3" fill="#a0a8b8"/>
<rect x="4" y="276" width="12" height="1" fill="#b0b8c8"/><rect x="4" y="279" width="12" height="1" fill="#b0b8c8"/><rect x="4" y="282" width="10" height="1" fill="#b0b8c8"/>
<path d="M5 286.5 L21.5 270 L23.5 271.5 L7 287.5 Z" fill="#3870c0" stroke="#203860" stroke-width="0.7"/>
<path d="M4 288 L5 286.5 L7 287.5 Z" fill="#e0b030"/>
<rect x="7" y="283" width="3" height="2" fill="#e8c040" transform="rotate(-45 8.5 284)"/>
<!-- paperclip 6-19 x 632-656 -->
<path d="M15.5 640 L15.5 650.5 Q15.5 655.5 12 655.5 Q8 655.5 8 650.5 L8 637.5 Q8 632.5 12.5 632.5 Q17.5 632.5 17.5 637.5 L17.5 648 M10.5 640 L10.5 650 Q10.5 652.5 12.5 652.5" fill="none" stroke="#6a86aa" stroke-width="1.7" stroke-linecap="round"/>
<!-- comments 1-24 x 676-697 -->
<path d="M1.5 676.5 L14.5 676.5 L14.5 685.5 L7 685.5 L4 689 L4 685.5 L1.5 685.5 Z" fill="#8cb4ec" stroke="#5c84c4" stroke-width="1" stroke-linejoin="round"/>
<rect x="4" y="679" width="8" height="1" fill="#e8f0ff"/><rect x="4" y="682" width="6" height="1" fill="#e8f0ff"/>
<path d="M10.5 683.5 L23.5 683.5 L23.5 693.5 L16 693.5 L13 697 L13 693.5 L10.5 693.5 Z" fill="#f8dc60" stroke="#c8a020" stroke-width="1" stroke-linejoin="round"/>
<rect x="13" y="686" width="8" height="1" fill="#fff8d0"/><rect x="13" y="689" width="8" height="1" fill="#fff8d0"/>

<!-- ===== SCROLLBAR ARROWS ===== -->
<path d="M1013 129 L1017 125 L1021 129" fill="none" stroke="#4a5a84" stroke-width="2"/>
<path d="M1013 683.5 L1017 687.5 L1021 683.5" fill="none" stroke="#4a5a84" stroke-width="2"/>
<path d="M41.5 699 L37.5 703 L41.5 707" fill="none" stroke="#4a5a84" stroke-width="2"/>
<path d="M998.5 699 L1002.5 703 L998.5 707" fill="none" stroke="#4a5a84" stroke-width="2"/>
<g fill="#fff"><rect x="1014" y="326" width="6" height="1"/><rect x="1014" y="328" width="6" height="1"/><rect x="1014" y="330" width="6" height="1"/><rect x="1014" y="332" width="6" height="1"/></g><g fill="#8ea6dc"><rect x="1015" y="327" width="6" height="1"/><rect x="1015" y="329" width="6" height="1"/><rect x="1015" y="331" width="6" height="1"/><rect x="1015" y="333" width="6" height="1"/></g>
<g fill="#fff"><rect x="508" y="699" width="1" height="6"/><rect x="510" y="699" width="1" height="6"/><rect x="512" y="699" width="1" height="6"/><rect x="514" y="699" width="1" height="6"/></g><g fill="#8ea6dc"><rect x="509" y="700" width="1" height="6"/><rect x="511" y="700" width="1" height="6"/><rect x="513" y="700" width="1" height="6"/><rect x="515" y="700" width="1" height="6"/></g>
<!-- ===== STATUS BAR ===== -->
<g opacity="0.9">
<circle cx="421" cy="724" r="6.8" fill="#c0d2f0" stroke="#a4bce4" stroke-width="1"/>
<path d="M417 726 L421 721.5 L425 726 Z M417 720 L425 720" fill="#fff" stroke="#fff" stroke-width="1.2"/>
<circle cx="444" cy="724" r="6.8" fill="#c0d2f0" stroke="#a4bce4" stroke-width="1"/>
<path d="M440 725 L444 720 L448 725 L446 725 L446 728 L442 728 L442 725 Z" fill="#fff"/>
<circle cx="583.5" cy="724" r="6.8" fill="#c0d2f0" stroke="#a4bce4" stroke-width="1"/>
<path d="M579.5 723 L583.5 728 L587.5 723 L585.5 723 L585.5 720 L581.5 720 L581.5 723 Z" fill="#fff"/>
<circle cx="608" cy="724" r="6.8" fill="#c0d2f0" stroke="#a4bce4" stroke-width="1"/>
<path d="M604 722 L608 726.5 L612 722 Z M604 728 L612 728" fill="#fff" stroke="#fff" stroke-width="1.2"/>
<path d="M623.5 724 L631 717 L631 721 L639.5 721 L639.5 727 L631 727 L631 731 Z" fill="#b8ccf0" stroke="#a0b8e4" stroke-width="0.8"/>
<path d="M663.5 724 L656 717 L656 721 L647.5 721 L647.5 727 L656 727 L656 731 Z" fill="#b8ccf0" stroke="#a0b8e4" stroke-width="0.8"/>
</g>
<rect x="457.5" y="716.5" width="112" height="15.5" rx="2" fill="#fff" stroke="#8090b8" stroke-width="1"/>
<rect x="557" y="717" width="12" height="14.5" rx="1.5" fill="#d4def6" stroke="#98a8d4" stroke-width="0.8"/>
<path d="M560.5 722.5 L565.5 722.5 L563 725.5 Z" fill="#283868"/>
<rect x="698" y="713" width="1" height="21" fill="#5c6890"/><rect x="699" y="713" width="1" height="21" fill="#f4f6fd"/>
<rect x="706.5" y="715.5" width="22" height="18" rx="1.5" fill="#c9d7f8" stroke="#8ea4dc" stroke-width="1"/>
<rect x="712.5" y="718.5" width="11" height="13" fill="#fff" stroke="#5a6898" stroke-width="1"/>
<rect x="714" y="721" width="8" height="1" fill="#8090b8"/><rect x="714" y="723" width="8" height="1" fill="#8090b8"/><rect x="714" y="725" width="8" height="1" fill="#8090b8"/><rect x="714" y="727" width="8" height="1" fill="#8090b8"/>
<g fill="#f0f3fc" stroke="#b4bfdf" stroke-width="1">
<rect x="736.5" y="717.5" width="11" height="5"/><rect x="736.5" y="725.5" width="11" height="5"/>
<rect x="759.5" y="717.5" width="5" height="13"/><rect x="766.5" y="717.5" width="5" height="13"/>
<rect x="784.5" y="717.5" width="4" height="4"/><rect x="791.5" y="717.5" width="4" height="4"/><rect x="784.5" y="726.5" width="4" height="4"/><rect x="791.5" y="726.5" width="4" height="4"/>
</g>
<path d="M880 721.5 L885 721.5 L882.5 724.5 Z" fill="#6878b0"/>
<circle cx="898" cy="723.5" r="7.3" fill="#e4e9f8" stroke="#5a6ca4" stroke-width="1.2"/>
<rect x="894" y="722.5" width="8" height="2" fill="#4a5c98"/>
<rect x="912" y="722" width="90" height="1" fill="#6c7cac"/><rect x="912" y="723" width="90" height="1" fill="#f8faff"/>
<path d="M953.5 716.5 L961.5 716.5 L961.5 727 L957.5 731 L953.5 727 Z" fill="#eef2fc" stroke="#5a6ca4" stroke-width="1"/>
<rect x="957" y="719" width="1" height="8" fill="#5a6ca4"/>
<circle cx="1015.5" cy="723.5" r="7.3" fill="#e4e9f8" stroke="#5a6ca4" stroke-width="1.2"/>
<rect x="1011.5" y="722.5" width="8" height="2" fill="#4a5c98"/><rect x="1014.5" y="719.5" width="2" height="8" fill="#4a5c98"/>

<!-- ===== TASKBAR ===== -->
<path d="M0 738 L88 738 Q96.5 739 96.5 753 Q96.5 767 88 768 L0 768 Z" fill="url(#startg)"/>
<path d="M0 738 L88 738 Q96.5 739 96.5 753 Q96.5 767 88 768 L0 768 Z" fill="url(#startsh)"/>
<path d="M2 739.5 L86 739.5" stroke="#8fd08f" stroke-width="1.5" opacity="0.5"/>
<path d="M96 739 Q97.5 753 96 768" fill="none" stroke="#1c5a1c" stroke-width="1" opacity="0.6"/>
<!-- flag 10-29 x 744-760 -->
<g transform="translate(11 744.5) skewX(-10)">
<path d="M4 0.8 Q7 -0.5 10.2 1.2 L9.4 7.6 Q6.4 6 3.2 7.2 Z" fill="#f26b2a"/>
<path d="M11.2 1.5 Q14.8 3 18.5 1.6 L17.6 8.1 Q14 9.4 10.4 7.9 Z" fill="#7cc238"/>
<path d="M3.1 8.4 Q6.3 7.2 9.3 8.8 L8.5 15.2 Q5.5 13.6 2.3 14.8 Z" fill="#3f8cf0"/>
<path d="M10.3 9.1 Q14 10.6 17.5 9.3 L16.6 15.6 Q13 17 9.5 15.4 Z" fill="#fcc817"/>
</g>
<!-- grip -->
<g fill="#1a3c9c">
<rect x="106" y="744" width="2" height="2"/><rect x="108" y="747" width="2" height="2"/><rect x="106" y="750" width="2" height="2"/><rect x="108" y="753" width="2" height="2"/><rect x="106" y="756" width="2" height="2"/><rect x="108" y="759" width="2" height="2"/><rect x="106" y="762" width="2" height="2"/>
<rect x="208" y="744" width="2" height="2"/><rect x="210" y="747" width="2" height="2"/><rect x="208" y="750" width="2" height="2"/><rect x="210" y="753" width="2" height="2"/><rect x="208" y="756" width="2" height="2"/><rect x="210" y="759" width="2" height="2"/><rect x="208" y="762" width="2" height="2"/>
</g>
<!-- IE 119-135 x 744-761 -->
<ellipse cx="127" cy="752.5" rx="9.5" ry="3" transform="rotate(-45 127 752.5)" fill="none" stroke="#e0c060" stroke-width="1.5"/>
<path d="M124 753 L133 753 Q133 747.5 128.5 747.5 Q123.5 747.5 123.5 753 Q123.5 758.5 128.5 758.5 Q131 758.5 132.5 756.5" fill="none" stroke="#3aa0f4" stroke-width="3"/>
<path d="M124 753 L133 753" stroke="#1a68d0" stroke-width="1"/>
<path d="M120.5 759.5 Q119 757 122 753" fill="none" stroke="#e0c060" stroke-width="1.5"/>
<!-- quick 2 142-157 x 744-760 -->
<path d="M144 746 Q150 743.5 155 746.5 Q157.5 752 155 758.5 Q150 761 144 758.5 Q141.5 752 144 746 Z" fill="#f4f8ff" stroke="#1848b0" stroke-width="1"/>
<path d="M146.5 749 L151 749 L153 751 L153 756 L148 756 L146.5 754 Z" fill="#4a88e0"/>
<path d="M148 752 L150.5 752 L150.5 754 L148 754 Z" fill="#101828"/>
<circle cx="156" cy="751" r="1" fill="#f07040"/>
<!-- outlook 165-180 x 744-760 -->
<rect x="165.5" y="744.5" width="13" height="13" rx="2.5" fill="#f4c890" stroke="#d89858" stroke-width="1"/>
<circle cx="174" cy="753.5" r="6" fill="#fbe0a8" stroke="#d8a060" stroke-width="1"/>
<path d="M171 752 L174 755 L177 752" fill="none" stroke="#b06820" stroke-width="1.3"/>
<!-- >> -->
<path d="M193.5 745.5 L196.5 748 L193.5 750.5 M197.5 745.5 L200.5 748 L197.5 750.5" fill="none" stroke="#c8dcff" stroke-width="1.2"/>
<!-- task buttons -->
<rect x="219" y="742" width="111" height="22.5" rx="3" fill="url(#btng)" stroke="#2a5ed2" stroke-width="1"/>
<rect x="331.5" y="742" width="111.5" height="22.5" rx="3" fill="url(#btng)" stroke="#2a5ed2" stroke-width="1"/>
<rect x="444.5" y="742" width="112.5" height="22.5" rx="3" fill="url(#btng)" stroke="#2a5ed2" stroke-width="1"/>
<rect x="559" y="742" width="112" height="22.5" rx="3" fill="url(#btng)" stroke="#2a5ed2" stroke-width="1"/>
<rect x="672" y="742" width="113.5" height="22.5" rx="3" fill="url(#btnp)" stroke="#17379a" stroke-width="1"/>
<rect x="787" y="742" width="112" height="22.5" rx="3" fill="url(#btng)" stroke="#2a5ed2" stroke-width="1"/>
<!-- goldmine icon 228-243 x 745-760 -->
<path d="M229.5 749 L231 745.5 L241 745.5 L242.5 749 L242.5 759.5 L229.5 759.5 Z" fill="#e8b820" stroke="#201808" stroke-width="1.2"/>
<rect x="231" y="751" width="10" height="7" fill="#a86810"/>
<path d="M234 753 L234 755.5 L238 755.5 L238 753" fill="none" stroke="#ffe080" stroke-width="1"/>
<!-- chrome 342-356 x 746-760 -->
<circle cx="349" cy="753" r="7" fill="#e84030"/>
<path d="M349 753 L349 746 A7 7 0 0 1 355.1 756.5 Z" fill="#f8c818"/>
<path d="M349 753 L355.1 756.5 A7 7 0 0 1 342.9 756.5 Z" fill="#38a048"/>
<path d="M349 753 L342.9 756.5 A7 7 0 0 1 342.9 749.5 Z" fill="#38a048"/>
<circle cx="349" cy="753" r="3.3" fill="#fff"/><circle cx="349" cy="753" r="2.4" fill="#3c78d8"/>
<path d="M435 752 L440 752 L437.5 754.5 Z" fill="#fff"/>
<!-- outlook btn icon 454-469 x 745-760 -->
<rect x="454.5" y="745" width="13" height="13" rx="2.5" fill="#f4c890" stroke="#d89858" stroke-width="1"/>
<circle cx="463" cy="754" r="6" fill="#fbe0a8" stroke="#d8a060" stroke-width="1"/>
<path d="M460 752.5 L463 755.5 L466 752.5" fill="none" stroke="#b06820" stroke-width="1.3"/>
<!-- envelope 568-582 x 747-757 -->
<rect x="568.5" y="747.5" width="13" height="10" fill="#f8e090" stroke="#c8a040" stroke-width="1"/>
<path d="M568.5 747.5 L575 753 L581.5 747.5" fill="none" stroke="#c8a040" stroke-width="1"/>
<rect x="683.5" y="748.5" width="13" height="10" fill="#f8e090" stroke="#c8a040" stroke-width="1"/>
<path d="M683.5 748.5 L690 754 L696.5 748.5" fill="none" stroke="#c8a040" stroke-width="1"/>
<!-- foxit icon 797-811 x 746-760 -->
<rect x="797" y="746" width="14" height="14" rx="1.5" fill="url(#fxbg)" stroke="#40608c" stroke-width="1"/>
<path d="M798.5 759 C800 756 802 757 804 753 C806 750 808 751 810 747 L810 751 C808 754 807 753 805 756 C803 759 801 758 799.5 760 Z" fill="url(#fxsw)"/>
<!-- tray -->
<rect x="913" y="738" width="111" height="30" fill="url(#trayg)"/><rect x="913" y="738" width="111" height="1" fill="#0c68c8"/>
<rect x="913" y="738" width="1" height="30" fill="#0e50b0"/>
<rect x="914" y="738" width="1" height="30" fill="#1cb0f8"/>
<circle cx="913.5" cy="753.5" r="8.3" fill="url(#bluec)" stroke="#8cc0f4" stroke-width="0.8"/>
<path d="M915.5 749.5 L911.5 753.5 L915.5 757.5" fill="none" stroke="#fff" stroke-width="2.2"/>
<rect x="925" y="745" width="12" height="12" rx="2.5" fill="#f4c890" stroke="#d89858" stroke-width="1"/>
<circle cx="932.5" cy="753" r="6" fill="#fbe0a8" stroke="#d8a060" stroke-width="1"/>
<path d="M929.5 751.5 L932.5 754.5 L935.5 751.5" fill="none" stroke="#b06820" stroke-width="1.3"/>
<circle cx="949.5" cy="753" r="7.2" fill="url(#ball)" stroke="#108010" stroke-width="0.6"/>
<rect x="966.5" y="745.5" width="7" height="6" fill="#a8d0f8" stroke="#4878b8" stroke-width="1"/>
<rect x="960.5" y="749.5" width="7" height="6" fill="#c0e0ff" stroke="#4878b8" stroke-width="1"/>
<rect x="962" y="757" width="5" height="2" fill="#d0c8e8"/><rect x="968" y="753" width="5" height="2" fill="#d0c8e8"/>

<!-- ui text -->
<text x="23.35" y="16.0" font-family="Liberation Sans" font-weight="400" font-size="12.5" fill="#1a2040" textLength="210.89" lengthAdjust="spacingAndGlyphs" >S (5).pdf - Foxit Reader - [S (5).pdf]</text>
<text x="15.00" y="40.8" font-family="Liberation Sans" font-weight="400" font-size="12.2" fill="#1a1a30" textLength="20.98" lengthAdjust="spacingAndGlyphs" >File</text>
<text x="50.10" y="40.8" font-family="Liberation Sans" font-weight="400" font-size="12.2" fill="#1a1a30" textLength="22.32" lengthAdjust="spacingAndGlyphs" >Edit</text>
<text x="87.05" y="40.8" font-family="Liberation Sans" font-weight="400" font-size="12.2" fill="#1a1a30" textLength="28.55" lengthAdjust="spacingAndGlyphs" >View</text>
<text x="129.61" y="40.8" font-family="Liberation Sans" font-weight="400" font-size="12.2" fill="#1a1a30" textLength="31.94" lengthAdjust="spacingAndGlyphs" >Tools</text>
<text x="175.46" y="40.8" font-family="Liberation Sans" font-weight="400" font-size="12.2" fill="#1a1a30" textLength="62.38" lengthAdjust="spacingAndGlyphs" >Comments</text>
<text x="251.07" y="40.8" font-family="Liberation Sans" font-weight="400" font-size="12.2" fill="#1a1a30" textLength="37.67" lengthAdjust="spacingAndGlyphs" >Forms</text>
<text x="302.15" y="40.8" font-family="Liberation Sans" font-weight="400" font-size="12.2" fill="#1a1a30" textLength="25.67" lengthAdjust="spacingAndGlyphs" >Help</text>
<text x="12.04" y="100.6" font-family="Liberation Sans" font-weight="400" font-size="12.5" fill="#101018" textLength="51.99" lengthAdjust="spacingAndGlyphs" >S (5).pdf</text>
<text stroke="#f6fff0" stroke-width="0.35" x="867.33" y="100.5" font-family="Liberation Sans" font-weight="400" font-size="12.8" fill="#f6fff0" textLength="147.22" lengthAdjust="spacingAndGlyphs" >Fastest PDF index &amp; search</text>
<text x="458.71" y="730.0" font-family="Liberation Sans" font-weight="400" font-size="12.2" fill="#000" textLength="49.74" lengthAdjust="spacingAndGlyphs" >1 (1 / 1)</text>
<text x="820.21" y="728.8" font-family="Liberation Sans" font-weight="400" font-size="12.2" fill="#1a1a30" textLength="34.01" lengthAdjust="spacingAndGlyphs" >100%</text>
<text filter="url(#tsh)" x="34.14" y="759.2" font-family="Liberation Sans" font-weight="700" font-size="19" fill="#fff" textLength="37.20" lengthAdjust="spacingAndGlyphs" font-style="italic">start</text>
<text x="247.50" y="757.0" font-family="Liberation Sans" font-weight="400" font-size="11" fill="#fff" textLength="67.78" lengthAdjust="spacingAndGlyphs" >GoldMine 6....</text>
<text x="359.19" y="757.0" font-family="Liberation Sans" font-weight="400" font-size="11" fill="#f8d8a8" textLength="7.29" lengthAdjust="spacingAndGlyphs" >2</text>
<text x="370.19" y="757.0" font-family="Liberation Sans" font-weight="400" font-size="11" fill="#fff" textLength="48.08" lengthAdjust="spacingAndGlyphs" >Google ...</text>
<text x="472.68" y="757.0" font-family="Liberation Sans" font-weight="400" font-size="11" fill="#fff" textLength="70.06" lengthAdjust="spacingAndGlyphs" >Inbox - Micr...</text>
<text x="586.34" y="757.0" font-family="Liberation Sans" font-weight="400" font-size="11" fill="#fff" textLength="66.39" lengthAdjust="spacingAndGlyphs" >Shower scr...</text>
<text x="701.38" y="757.7" font-family="Liberation Sans" font-weight="400" font-size="11" fill="#fff" textLength="71.51" lengthAdjust="spacingAndGlyphs" >S - Message...</text>
<text x="814.28" y="757.0" font-family="Liberation Sans" font-weight="400" font-size="11" fill="#fff" textLength="66.72" lengthAdjust="spacingAndGlyphs" >S (5).pdf - ...</text>
<text x="982.20" y="756.8" font-family="Liberation Sans" font-weight="400" font-size="11" fill="#fff" textLength="29.11" lengthAdjust="spacingAndGlyphs" >11:10</text>
</svg>

</body></html>
